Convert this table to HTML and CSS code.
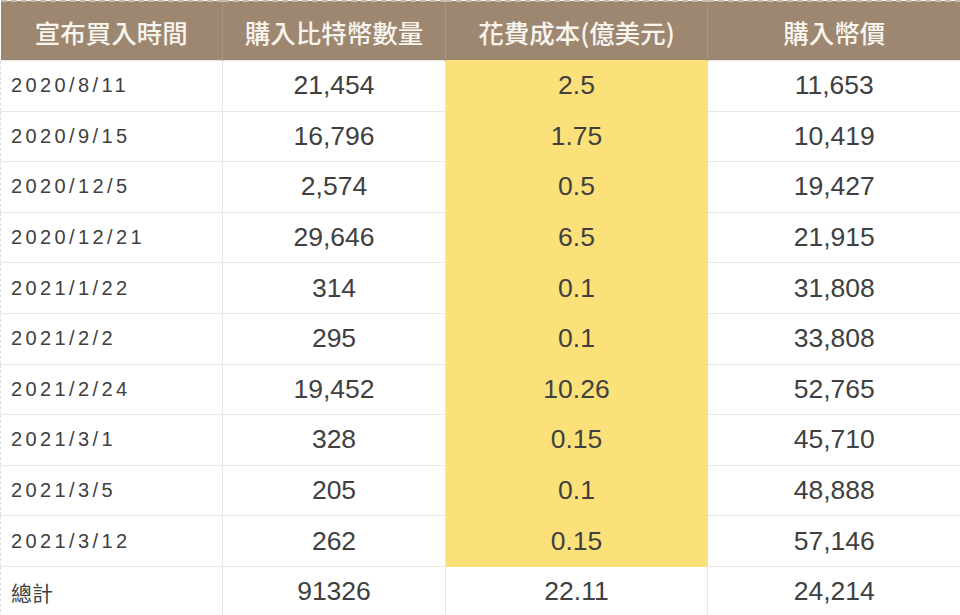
FILE: index.html
```html
<!DOCTYPE html>
<html lang="zh-Hant">
<head>
<meta charset="utf-8">
<link rel="stylesheet" href="styles.css">
</head>
<body>
<table class="btc">
  <colgroup>
    <col class="c1"><col class="c2"><col class="c3"><col class="c4">
  </colgroup>
  <thead>
    <tr><th>宣布買入時間</th><th>購入比特幣數量</th><th>花費成本(億美元)</th><th>購入幣價</th></tr>
  </thead>
  <tbody>
    <tr><td class="date">2020/8/11</td><td>21,454</td><td class="hl">2.5</td><td>11,653</td></tr>
    <tr><td class="date">2020/9/15</td><td>16,796</td><td class="hl">1.75</td><td>10,419</td></tr>
    <tr><td class="date">2020/12/5</td><td>2,574</td><td class="hl">0.5</td><td>19,427</td></tr>
    <tr><td class="date">2020/12/21</td><td>29,646</td><td class="hl">6.5</td><td>21,915</td></tr>
    <tr><td class="date">2021/1/22</td><td>314</td><td class="hl">0.1</td><td>31,808</td></tr>
    <tr><td class="date">2021/2/2</td><td>295</td><td class="hl">0.1</td><td>33,808</td></tr>
    <tr><td class="date">2021/2/24</td><td>19,452</td><td class="hl">10.26</td><td>52,765</td></tr>
    <tr><td class="date">2021/3/1</td><td>328</td><td class="hl">0.15</td><td>45,710</td></tr>
    <tr><td class="date">2021/3/5</td><td>205</td><td class="hl">0.1</td><td>48,888</td></tr>
    <tr><td class="date">2021/3/12</td><td>262</td><td class="hl">0.15</td><td>57,146</td></tr>
    <tr><td class="total">總計</td><td>91326</td><td>22.11</td><td>24,214</td></tr>
  </tbody>
</table>
</body>
</html>
```

FILE: styles.css
```css
html, body {
  margin: 0;
  padding: 0;
  background: #ffffff;
  width: 960px;
  height: 615px;
  overflow: hidden;
}

.btc {
  width: 960px;
  border-collapse: collapse;
  table-layout: fixed;
  font-family: "Liberation Sans", "Noto Sans CJK TC", sans-serif;
  color: #404040;
}

.c1 { width: 222px; }
.c2 { width: 223px; }
.c3 { width: 262px; }
.c4 { width: 253px; }

.btc thead th {
  height: 58px;
  padding: 0;
  background: #9d8770;
  color: #f8f4ee;
  font-family: "Noto Sans CJK TC", "Liberation Sans", sans-serif;
  font-size: 25.5px;
  font-weight: 500;
  text-align: center;
  border-left: 1px solid #a99681;
  border-top: 2px dashed #c9bcae;
}

.btc thead th:first-child {
  border-left: none;
}

.btc tbody td {
  height: 49.6px;
  padding: 0;
  font-size: 26.5px;
  text-align: center;
  border: 1px solid #e8e8e8;
}

.btc tbody td:first-child {
  border-left: 1px dashed #dddddd;
}

.btc tbody td:last-child {
  border-right: none;
}

.btc tbody td.date {
  text-align: left;
  padding-left: 10px;
  font-size: 20px;
  letter-spacing: 3.4px;
}

.btc tbody td.total {
  text-align: left;
  padding-left: 10px;
  font-family: "Noto Sans CJK TC", sans-serif;
  font-size: 21px;
}

.btc tbody td.hl {
  background: #fce07a;
  border-color: #fce07a;
}
```
